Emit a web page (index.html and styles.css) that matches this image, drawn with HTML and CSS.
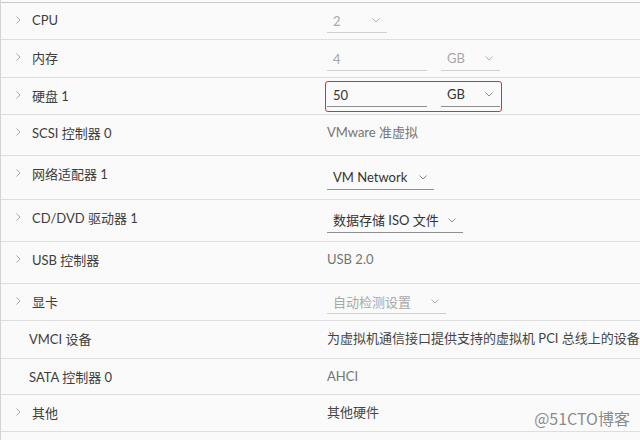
FILE: index.html
```html
<!DOCTYPE html>
<html lang="zh-CN">
<head>
    <meta charset="UTF-8">
    <title>虚拟硬件</title>
    <link rel="stylesheet" href="styles.css">
</head>
<body>
    <div class="panel">
        <div class="row">
            <div class="label"><svg class="caret" viewBox="0 0 5 8"><path d="M0.5 0.5 L4 4 L0.5 7.5"/></svg>CPU</div>
            <div class="value control">
                <div class="select disabled w-cpu"><span>2</span><svg class="arrow" viewBox="0 0 8 5"><path d="M0.5 0.5 L4 4 L7.5 0.5"/></svg></div>
            </div>
        </div>

        <div class="row h38">
            <div class="label"><svg class="caret" viewBox="0 0 5 8"><path d="M0.5 0.5 L4 4 L0.5 7.5"/></svg>内存</div>
            <div class="value control">
                <div class="pair">
                    <div class="input disabled w-size">4</div>
                    <div class="select disabled w-unit"><span>GB</span><svg class="arrow" viewBox="0 0 8 5"><path d="M0.5 0.5 L4 4 L7.5 0.5"/></svg></div>
                </div>
            </div>
        </div>

        <div class="row">
            <div class="label"><svg class="caret" viewBox="0 0 5 8"><path d="M0.5 0.5 L4 4 L0.5 7.5"/></svg>硬盘 1</div>
            <div class="value control">
                <div class="pair editing">
                    <div class="input w-size">50</div>
                    <div class="select w-unit"><span>GB</span><svg class="arrow" viewBox="0 0 8 5"><path d="M0.5 0.5 L4 4 L7.5 0.5"/></svg></div>
                </div>
            </div>
        </div>

        <div class="row h41">
            <div class="label"><svg class="caret" viewBox="0 0 5 8"><path d="M0.5 0.5 L4 4 L0.5 7.5"/></svg>SCSI 控制器 0</div>
            <div class="value muted">VMware 准虚拟</div>
        </div>

        <div class="row h44">
            <div class="label"><svg class="caret" viewBox="0 0 5 8"><path d="M0.5 0.5 L4 4 L0.5 7.5"/></svg>网络适配器 1</div>
            <div class="value control">
                <div class="select w-net"><span>VM Network</span><svg class="arrow" viewBox="0 0 8 5"><path d="M0.5 0.5 L4 4 L7.5 0.5"/></svg></div>
            </div>
        </div>

        <div class="row h42">
            <div class="label"><svg class="caret" viewBox="0 0 5 8"><path d="M0.5 0.5 L4 4 L0.5 7.5"/></svg>CD/DVD 驱动器 1</div>
            <div class="value control">
                <div class="select w-iso"><span>数据存储 ISO 文件</span><svg class="arrow" viewBox="0 0 8 5"><path d="M0.5 0.5 L4 4 L7.5 0.5"/></svg></div>
            </div>
        </div>

        <div class="row h42">
            <div class="label"><svg class="caret" viewBox="0 0 5 8"><path d="M0.5 0.5 L4 4 L0.5 7.5"/></svg>USB 控制器</div>
            <div class="value muted">USB 2.0</div>
        </div>

        <div class="row">
            <div class="label"><svg class="caret" viewBox="0 0 5 8"><path d="M0.5 0.5 L4 4 L0.5 7.5"/></svg>显卡</div>
            <div class="value control">
                <div class="select disabled w-video"><span>自动检测设置</span><svg class="arrow" viewBox="0 0 8 5"><path d="M0.5 0.5 L4 4 L7.5 0.5"/></svg></div>
            </div>
        </div>

        <div class="row h38">
            <div class="label plain">VMCI 设备</div>
            <div class="value">为虚拟机通信接口提供支持的虚拟机 PCI 总线上的设备</div>
        </div>

        <div class="row h36">
            <div class="label plain">SATA 控制器 0</div>
            <div class="value muted">AHCI</div>
        </div>

        <div class="row">
            <div class="label"><svg class="caret" viewBox="0 0 5 8"><path d="M0.5 0.5 L4 4 L0.5 7.5"/></svg>其他</div>
            <div class="value">其他硬件</div>
        </div>
    </div>

    <div class="watermark">@51CTO博客</div>
</body>
</html>
```

FILE: styles.css
```css
html, body { margin: 0; height: 100%; }
body { background: #fafafa; font-family: Lato, "Noto Sans CJK SC", sans-serif; font-size: 13px; color: #454545; overflow: hidden; position: relative; }

.panel { border-left: 1px solid #d4d4d4; padding-top: 2px; min-height: 100%; box-sizing: border-box; }

.row { display: grid; grid-template-columns: 326px 1fr; height: 37px; box-sizing: border-box; border-top: 1px solid #dedede; }
.row:first-child { border-top-color: #c9c9c9; }
.row:last-child { border-bottom: 1px solid #dedede; height: 38px; }
.h36 { height: 36px; }
.h38 { height: 38px; }
.h41 { height: 41px; }
.h42 { height: 42px; }
.h44 { height: 44px; }

.label { display: flex; align-items: center; height: 20px; padding-top: 7px; white-space: nowrap; color: #3d3d3d; }
.label.plain { padding-left: 28px; }
.caret { width: 5px; height: 8px; margin: 0 11px 0 15px; fill: none; stroke: #a6a6a6; stroke-width: 1; }

.value { line-height: 20px; padding-top: 7px; white-space: nowrap; }
.value.muted { color: #747474; }
.value.control { padding-top: 0; align-self: center; }

.pair { display: flex; gap: 14px; }
.pair.editing { border: 1px solid #ff2020; border-radius: 3px; padding: 1px 1px 4px 1px; margin-left: -2px; width: max-content; }

.input, .select { height: 24px; line-height: 24px; box-sizing: border-box; padding: 0 7px 0 6px; border-bottom: 1px solid #8f8f8f; color: #333; }
.select { display: flex; justify-content: space-between; align-items: center; }
.input.disabled, .select.disabled { color: #a8a8a8; border-bottom-color: #cfcfcf; }

.arrow { width: 8px; height: 5px; fill: none; stroke: #8c8c8c; stroke-width: 1; }
.disabled .arrow { stroke: #b0b0b0; }

.w-cpu { width: 60px; }
.w-size { width: 100px; }
.w-unit { width: 59px; }
.w-net { width: 107px; }
.w-iso { width: 136px; }
.w-video { width: 119px; }

.watermark { position: absolute; right: 10px; bottom: 10px; font-family: "Noto Sans CJK SC", sans-serif; font-size: 16px; color: #8a8a8a; text-shadow: 0 0 2px #fff, 0 0 2px #fff; }
```
